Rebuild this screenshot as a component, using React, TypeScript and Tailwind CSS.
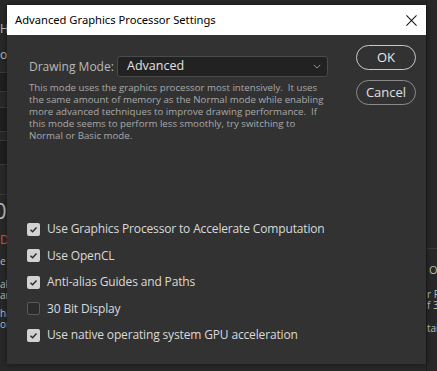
import React from 'react';

const font = { fontFamily: '"Open Sans", "Noto Sans", sans-serif' };

const CheckIcon = () => (
  <svg viewBox="0 0 12 12" className="w-[9px] h-[9px]">
    <path d="M2 6.2 L4.8 9 L10 3.2" fill="none" stroke="#2a2a2a" strokeWidth="1.9" />
  </svg>
);

const Option: React.FC<{ label: string; checked?: boolean }> = ({ label, checked }) => (
  <div className="flex items-center gap-[7px] h-[26.5px]">
    {checked ? (
      <div className="w-[13px] h-[13px] rounded-[2px] bg-[#d2d2d2] flex items-center justify-center">
        <CheckIcon />
      </div>
    ) : (
      <div className="w-[13px] h-[13px] rounded-[2px] border border-[#5a5a5a] bg-[#2b2b2b]" />
    )}
    <span className="text-[12px] tracking-[-0.15px] text-[#dadada] whitespace-nowrap">{label}</span>
  </div>
);

// bits of the app window that peek out around the dialog
const Background = () => (
  <div className="absolute inset-0 flex justify-between text-[#bdbdbd] whitespace-nowrap">
    <div className="w-[20px] flex flex-col text-[12px] leading-none overflow-hidden">
      <div className="h-[22px] shrink-0" />
      <div className="h-[14px] leading-[14px] shrink-0">Hi</div>
      <div className="h-[12px] shrink-0" />
      <div className="h-[14px] leading-[14px] shrink-0">ot</div>
      <div className="h-[10px] shrink-0" />
      <div className="h-[20px] bg-[#1f1f1f] border-y border-[#3a3a3a] shrink-0" />
      <div className="h-[15px] shrink-0" />
      <div className="h-[25px] bg-[#1f1f1f] border-y border-[#3a3a3a] shrink-0" />
      <div className="h-[8px] shrink-0" />
      <div className="h-[25px] bg-[#1f1f1f] border-y border-[#3a3a3a] shrink-0" />
      <div className="h-[30px] border-b border-[#3a3a3a] shrink-0" />
      <div className="h-[22px] mt-[4px] -ml-[6px] text-[22px] leading-[22px] shrink-0">0</div>
      <div className="h-[12px] mt-[13px] leading-[12px] text-[#d85050] shrink-0">D</div>
      <div className="h-[10px] mt-[10px] text-[10px] leading-[10px] shrink-0">e</div>
      <div className="h-[11px] mt-[13px] text-[10px] leading-[11px] shrink-0">ab</div>
      <div className="h-[11px] text-[10px] leading-[11px] shrink-0">an</div>
      <div className="h-[11px] mt-[7px] text-[10px] leading-[11px] shrink-0">ha</div>
      <div className="h-[11px] text-[10px] leading-[11px] shrink-0">or</div>
    </div>
    <div className="w-[11px] flex flex-col text-[10px] leading-none border-l border-[#1f1f1f] overflow-hidden">
      <div className="h-[249px] border-b border-[#3a3a3a] shrink-0" />
      <div className="mt-[15px] h-[11px] pl-[2px] text-[11px] leading-[11px] shrink-0">Op</div>
      <div className="mt-[14px] h-[11px] leading-[11px] shrink-0">r P</div>
      <div className="h-[11px] leading-[11px] shrink-0">f 3</div>
      <div className="mt-[12px] h-[11px] leading-[11px] shrink-0">tail</div>
    </div>
  </div>
);

export default function App() {
  return (
    <div className="relative w-[437px] h-[371px] bg-[#282828] overflow-hidden" style={font}>
      <Background />
      <div className="absolute left-[7px] top-[5px] w-[419px] h-[359px] bg-[#323232] flex flex-col shadow-[0_0_6px_rgba(0,0,0,0.5)]">
        <div className="h-[30px] bg-white flex items-center justify-between pl-[8px] pr-[9px]">
          <span className="text-[11.2px] text-black" style={{ fontFamily: '"Noto Sans", sans-serif' }}>
            Advanced Graphics Processor Settings
          </span>
          <svg viewBox="0 0 12 12" className="w-[11px] h-[11px]">
            <path d="M0.5 0.5 L11.5 11.5 M11.5 0.5 L0.5 11.5" stroke="#111" strokeWidth="1.1" />
          </svg>
        </div>
        <div className="flex flex-1">
          <div className="flex-1 flex flex-col pl-[22px] pt-[21px]">
            <div className="flex items-center">
              <span className="text-[12px] text-[#b9b9b9] w-[88px] whitespace-nowrap">Drawing Mode:</span>
              <div className="w-[211px] h-[21px] bg-[#222222] border border-[#4a4a4a] rounded-[3px] flex items-center justify-between pl-[9px] pr-[6px]">
                <span className="text-[12.5px] text-[#e2e2e2]">Advanced</span>
                <svg viewBox="0 0 10 6" className="w-[8px] h-[5px]">
                  <path d="M1 1 L5 5 L9 1" fill="none" stroke="#9a9a9a" strokeWidth="1.2" />
                </svg>
              </div>
            </div>
            <p className="mt-[5px] text-[9.7px] leading-[12px] text-[#a9a9a9] whitespace-nowrap">
              This mode uses the graphics processor most intensively.&nbsp; It uses<br />
              the same amount of memory as the Normal mode while enabling<br />
              more advanced techniques to improve drawing performance.&nbsp; If<br />
              this mode seems to perform less smoothly, try switching to<br />
              Normal or Basic mode.
            </p>
            <div className="mt-[74px] -ml-[2px] flex flex-col">
              <Option label="Use Graphics Processor to Accelerate Computation" checked />
              <Option label="Use OpenCL" checked />
              <Option label="Anti-alias Guides and Paths" checked />
              <Option label="30 Bit Display" />
              <Option label="Use native operating system GPU acceleration" checked />
            </div>
          </div>
          <div className="w-[60px] mr-[10px] pt-[10px] flex flex-col gap-[10px]">
            <button className="h-[25px] rounded-full border-[1.5px] border-[#c8c8c8] text-[13px] text-[#e8e8e8]">OK</button>
            <button className="h-[25px] rounded-full border-[1.5px] border-[#8a8a8a] text-[13px] text-[#e0e0e0]">Cancel</button>
          </div>
        </div>
      </div>
    </div>
  );
}
